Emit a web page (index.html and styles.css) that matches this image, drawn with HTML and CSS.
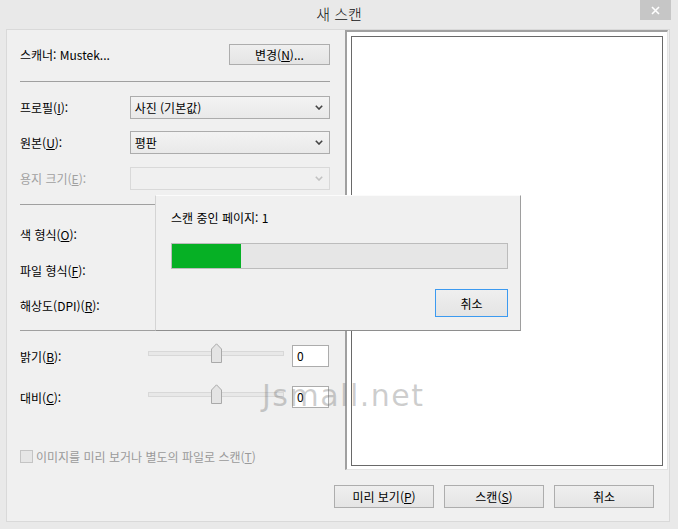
FILE: index.html
```html
<!DOCTYPE html>
<html lang="ko">
<head>
    <meta charset="UTF-8">
    <title>새 스캔</title>
    <link rel="stylesheet" href="styles.css">
</head>
<body>
    <div class="window">
        <div class="titlebar">
            <span class="title">새 스캔</span>
            <span class="close">
                <svg width="9" height="9" viewBox="0 0 9 9"><path d="M1 1 L8 8 M8 1 L1 8" stroke="#fff" stroke-width="1.6"/></svg>
            </span>
        </div>

        <div class="client">
            <div class="main">
                <div class="settings">
                    <div class="row row-scanner">
                        <span class="label-wide">스캐너: Mustek...</span>
                        <span class="btn btn-change">변경(<u>N</u>)...</span>
                    </div>
                    <div class="sep sep-1"></div>

                    <div class="row mt-14">
                        <span class="label">프로필(<u>I</u>):</span>
                        <div class="combo">
                            <span>사진 (기본값)</span>
                            <svg class="chevron" width="8" height="5" viewBox="0 0 8 5"><path d="M0.8 0.8 L4 4 L7.2 0.8" fill="none" stroke="#444" stroke-width="1.6"/></svg>
                        </div>
                    </div>
                    <div class="row mt-12">
                        <span class="label">원본(<u>U</u>):</span>
                        <div class="combo">
                            <span>평판</span>
                            <svg class="chevron" width="8" height="5" viewBox="0 0 8 5"><path d="M0.8 0.8 L4 4 L7.2 0.8" fill="none" stroke="#444" stroke-width="1.6"/></svg>
                        </div>
                    </div>
                    <div class="row mt-13 disabled">
                        <span class="label">용지 크기(<u>E</u>):</span>
                        <div class="combo combo-off">
                            <span></span>
                            <svg class="chevron" width="8" height="5" viewBox="0 0 8 5"><path d="M0.8 0.8 L4 4 L7.2 0.8" fill="none" stroke="#c2c2c2" stroke-width="1.6"/></svg>
                        </div>
                    </div>
                    <div class="sep mt-14"></div>

                    <div class="row mt-18">
                        <span class="label">색 형식(<u>O</u>):</span>
                    </div>
                    <div class="row mt-13">
                        <span class="label">파일 형식(<u>F</u>):</span>
                    </div>
                    <div class="row mt-12">
                        <span class="label">해상도(DPI)(<u>R</u>):</span>
                    </div>
                    <div class="sep mt-13"></div>

                    <div class="row row-slider mt-14">
                        <span class="label">밝기(<u>B</u>):</span>
                        <div class="slider">
                            <div class="track"></div>
                            <svg class="thumb" width="11" height="20" viewBox="0 0 11 20"><path d="M0.5 6 L5.5 0.8 L10.5 6 V19.5 H0.5 Z" fill="#e4e4e4" stroke="#a9a9a9"/></svg>
                        </div>
                        <span class="num">0</span>
                    </div>
                    <div class="row row-slider mt-19">
                        <span class="label">대비(<u>C</u>):</span>
                        <div class="slider">
                            <div class="track"></div>
                            <svg class="thumb" width="11" height="20" viewBox="0 0 11 20"><path d="M0.5 6 L5.5 0.8 L10.5 6 V19.5 H0.5 Z" fill="#e4e4e4" stroke="#a9a9a9"/></svg>
                        </div>
                        <span class="num">0</span>
                    </div>

                    <div class="check-row">
                        <span class="check"></span>
                        <span>이미지를 미리 보거나 별도의 파일로 스캔(<u>T</u>)</span>
                    </div>
                </div>

                <div class="preview">
                    <div class="preview-inner"></div>
                </div>
            </div>

            <div class="actions">
                <span class="btn">미리 보기(<u>P</u>)</span>
                <span class="btn">스캔(<u>S</u>)</span>
                <span class="btn">취소</span>
            </div>
        </div>

        <!-- progress popup over the main dialog -->
        <div class="progress-dialog">
            <div class="progress-text">스캔 중인 페이지: 1</div>
            <div class="progress">
                <div class="progress-fill"></div>
            </div>
            <div class="dialog-actions">
                <span class="btn btn-focus">취소</span>
            </div>
        </div>

        <div class="watermark">Jsmall.net</div>
    </div>
</body>
</html>
```

FILE: styles.css
```css
* {
    box-sizing: border-box;
}
body {
    margin: 0;
    font-family: "Noto Sans CJK KR", "Liberation Sans", sans-serif;
    font-size: 12px;
    color: #000;
}
u {
    text-underline-offset: 1px;
}
.window {
    position: relative;
    width: 678px;
    height: 529px;
    background: #e9e9e9;
    overflow: hidden;
}
.titlebar {
    height: 29px;
    display: grid;
    grid-template-columns: 1fr auto 1fr;
}
.title {
    grid-column: 2;
    font-size: 15px;
    font-weight: 300;
    line-height: 28px;
    color: #111;
}
.close {
    grid-column: 3;
    justify-self: end;
    align-self: start;
    width: 31px;
    height: 20px;
    margin-right: 7px;
    background: #c6c6c6;
    display: flex;
    align-items: center;
    justify-content: center;
}
.client {
    margin-left: 6px;
    width: 664px;
    height: 493px;
    background: #f0f0f0;
    border: 1px solid #d9d9d9;
}
.main {
    display: flex;
    height: 440px;
}
.settings {
    width: 310px;
    margin-left: 13px;
}
.row {
    display: flex;
    align-items: center;
    height: 23px;
}
.row-scanner {
    margin-top: 14px;
    height: 21px;
}
.label-wide {
    flex: 1;
}
.label {
    width: 110px;
}
.mt-12 { margin-top: 12px; }
.mt-13 { margin-top: 13px; }
.mt-14 { margin-top: 14px; }
.mt-18 { margin-top: 18px; }
.mt-19 { margin-top: 19px; }
.sep {
    height: 1px;
    background: #a0a0a0;
}
.sep-1 {
    margin-top: 16px;
}
.btn {
    display: flex;
    align-items: center;
    justify-content: center;
    height: 23px;
    border: 1px solid #adadad;
    background: linear-gradient(#efefef, #e4e4e4);
}
.btn-change {
    width: 101px;
    height: 21px;
}
.combo {
    width: 201px;
    height: 23px;
    display: flex;
    align-items: center;
    justify-content: space-between;
    padding: 0 6px 0 4px;
    border: 1px solid #acacac;
    background: linear-gradient(#f3f3f3, #e9e9e9);
}
.disabled {
    color: #a0a0a0;
}
.combo-off {
    border-color: #d9d9d9;
    background: #f0f0f0;
}
.row-slider {
    height: 22px;
}
.slider {
    position: relative;
    width: 136px;
    height: 22px;
    margin-left: 18px;
}
.track {
    position: absolute;
    left: 0;
    right: 0;
    top: 6px;
    height: 5px;
    border: 1px solid #d8d8d8;
    background: #e8e8e8;
}
.thumb {
    position: absolute;
    left: 63px;
    top: -2px;
}
.num {
    width: 37px;
    height: 22px;
    margin-left: 8px;
    padding-left: 4px;
    line-height: 20px;
    border: 1px solid #acacac;
    background: #fff;
}
.check-row {
    display: flex;
    align-items: center;
    gap: 3px;
    margin-top: 41px;
    height: 15px;
    color: #9a9a9a;
}
.check {
    width: 13px;
    height: 13px;
    border: 1px solid #c4c4c4;
    background: #e6e6e6;
}
.preview {
    width: 323px;
    height: 440px;
    margin-left: 15px;
    padding: 4px 4px 3px 4px;
    background: #fff;
    border-style: solid;
    border-width: 2px 1px 1px 2px;
    border-color: #a0a0a0 #e3e3e3 #e3e3e3 #a0a0a0;
}
.preview-inner {
    height: 100%;
    border: 1px solid #696969;
}
.actions {
    display: flex;
    justify-content: flex-end;
    gap: 10px;
    margin-top: 15px;
    padding-right: 15px;
}
.actions .btn {
    width: 100px;
}
.progress-dialog {
    position: absolute;
    left: 155px;
    top: 195px;
    width: 366px;
    height: 136px;
    padding: 14px 12px 0 15px;
    background: #f0f0f0;
    border: 1px solid;
    border-color: #fbfbfb #9e9e9e #8e8e8e #d4d4d4;
}
.progress-text {
    line-height: 16px;
}
.progress {
    margin-top: 17px;
    height: 26px;
    border: 1px solid #bcbcbc;
    background: #e6e6e6;
}
.progress-fill {
    width: 69px;
    height: 100%;
    background: #06b025;
}
.dialog-actions {
    display: flex;
    justify-content: flex-end;
    margin-top: 20px;
}
.btn-focus {
    width: 73px;
    height: 28px;
    border-color: #3c9af0;
}
.watermark {
    position: absolute;
    left: 262px;
    top: 381px;
    font-family: "DejaVu Sans", sans-serif;
    font-size: 30px;
    line-height: 30px;
    letter-spacing: 1.5px;
    color: rgba(110, 110, 110, 0.34);
    pointer-events: none;
}
```
